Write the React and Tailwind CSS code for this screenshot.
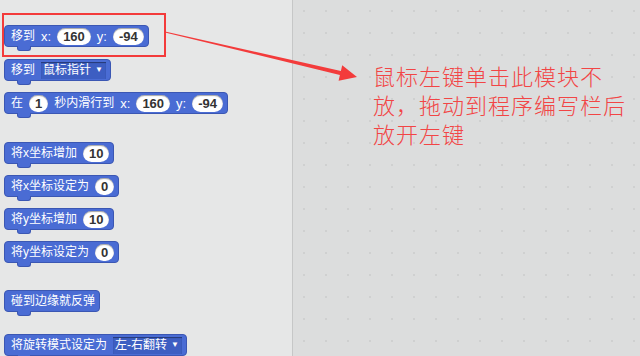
import React from "react";

const FONT = "font-['Liberation_Sans','Noto_Sans_CJK_SC',sans-serif]";

function Num({ children }) {
  return (
    <span className="inline-flex items-center justify-center h-[17px] min-w-[18px] px-[6px] rounded-full bg-white text-[#333] text-[13px] font-bold leading-none shadow-[inset_0_1px_1px_rgba(0,0,0,0.35)]">
      {children}
    </span>
  );
}

function Menu({ children }) {
  return (
    <span className="inline-flex items-center gap-[4px] h-[17px] pl-[2px] pr-[3px] bg-[#3d5ec2] text-white text-[12px] leading-none shadow-[inset_0_1px_1px_rgba(0,0,0,0.4)]">
      {children}
      <span className="text-[8px]">▼</span>
    </span>
  );
}

function Block({ className = "", children }) {
  return (
    <div className={`relative inline-flex items-center gap-[6px] h-[23px] pl-[6px] pr-[4px] bg-[#4a6cd4] border border-[#3b57b3] rounded-[4px] text-white text-[12px] leading-none ${className}`}>
      {children}
      <span className="absolute left-[12px] -bottom-[5px] w-[14px] h-[5px] bg-[#4a6cd4] border-b border-x border-[#3b57b3] rounded-b-[3px]" />
    </div>
  );
}

export default function App() {
  return (
    <div className={`relative flex w-[640px] h-[356px] overflow-hidden ${FONT}`}>
      <aside className="w-[292px] h-full bg-[#e6e7e7] flex flex-col items-start pl-[4px] pt-[25px]">
        <Block>
          移到 <span className="text-[13px]">x:</span> <Num>160</Num> <span className="text-[13px]">y:</span> <Num>-94</Num>
        </Block>
        <Block className="mt-[12px] h-[21px]">
          移到 <Menu>鼠标指针</Menu>
        </Block>
        <Block className="mt-[11px]">
          在 <Num>1</Num> 秒内滑行到 <span className="text-[13px]">x:</span> <Num>160</Num> <span className="text-[13px]">y:</span> <Num>-94</Num>
        </Block>
        <Block className="mt-[28px]">
          将x坐标增加 <Num>10</Num>
        </Block>
        <Block className="mt-[11px]">
          将x坐标设定为 <Num>0</Num>
        </Block>
        <Block className="mt-[11px]">
          将y坐标增加 <Num>10</Num>
        </Block>
        <Block className="mt-[11px]">
          将y坐标设定为 <Num>0</Num>
        </Block>
        <Block className="mt-[27px]">碰到边缘就反弹</Block>
        <Block className="mt-[22px]">
          将旋转模式设定为 <Menu>左-右翻转</Menu>
        </Block>
      </aside>

      <main className="flex-1 h-full border-l border-[#c6c7c7] bg-[#dcdddd] bg-[radial-gradient(circle,#cfd0d0_1px,transparent_1.5px)] bg-[size:22px_22px] pl-[80px] pt-[61px]">
        <p className="text-[22px] leading-[29px] tracking-[1px] text-[#f24545] font-light font-['Noto_Sans_CJK_SC',sans-serif]">
          鼠标左键单击此模块不
          <br />
          放，拖动到程序编写栏后
          <br />
          放开左键
        </p>
      </main>

      <div className="absolute left-[2px] top-[13px] w-[164px] h-[44px] border-2 border-[#f33b3b]" />
      <svg className="absolute left-0 top-0 pointer-events-none" width="640" height="356">
        <polygon
          points="165,31.5 340.9,71.1 342.2,65.2 357,77 338.6,80.8 339.9,74.9 165,32.5"
          fill="#f33b3b"
        />
      </svg>
    </div>
  );
}
